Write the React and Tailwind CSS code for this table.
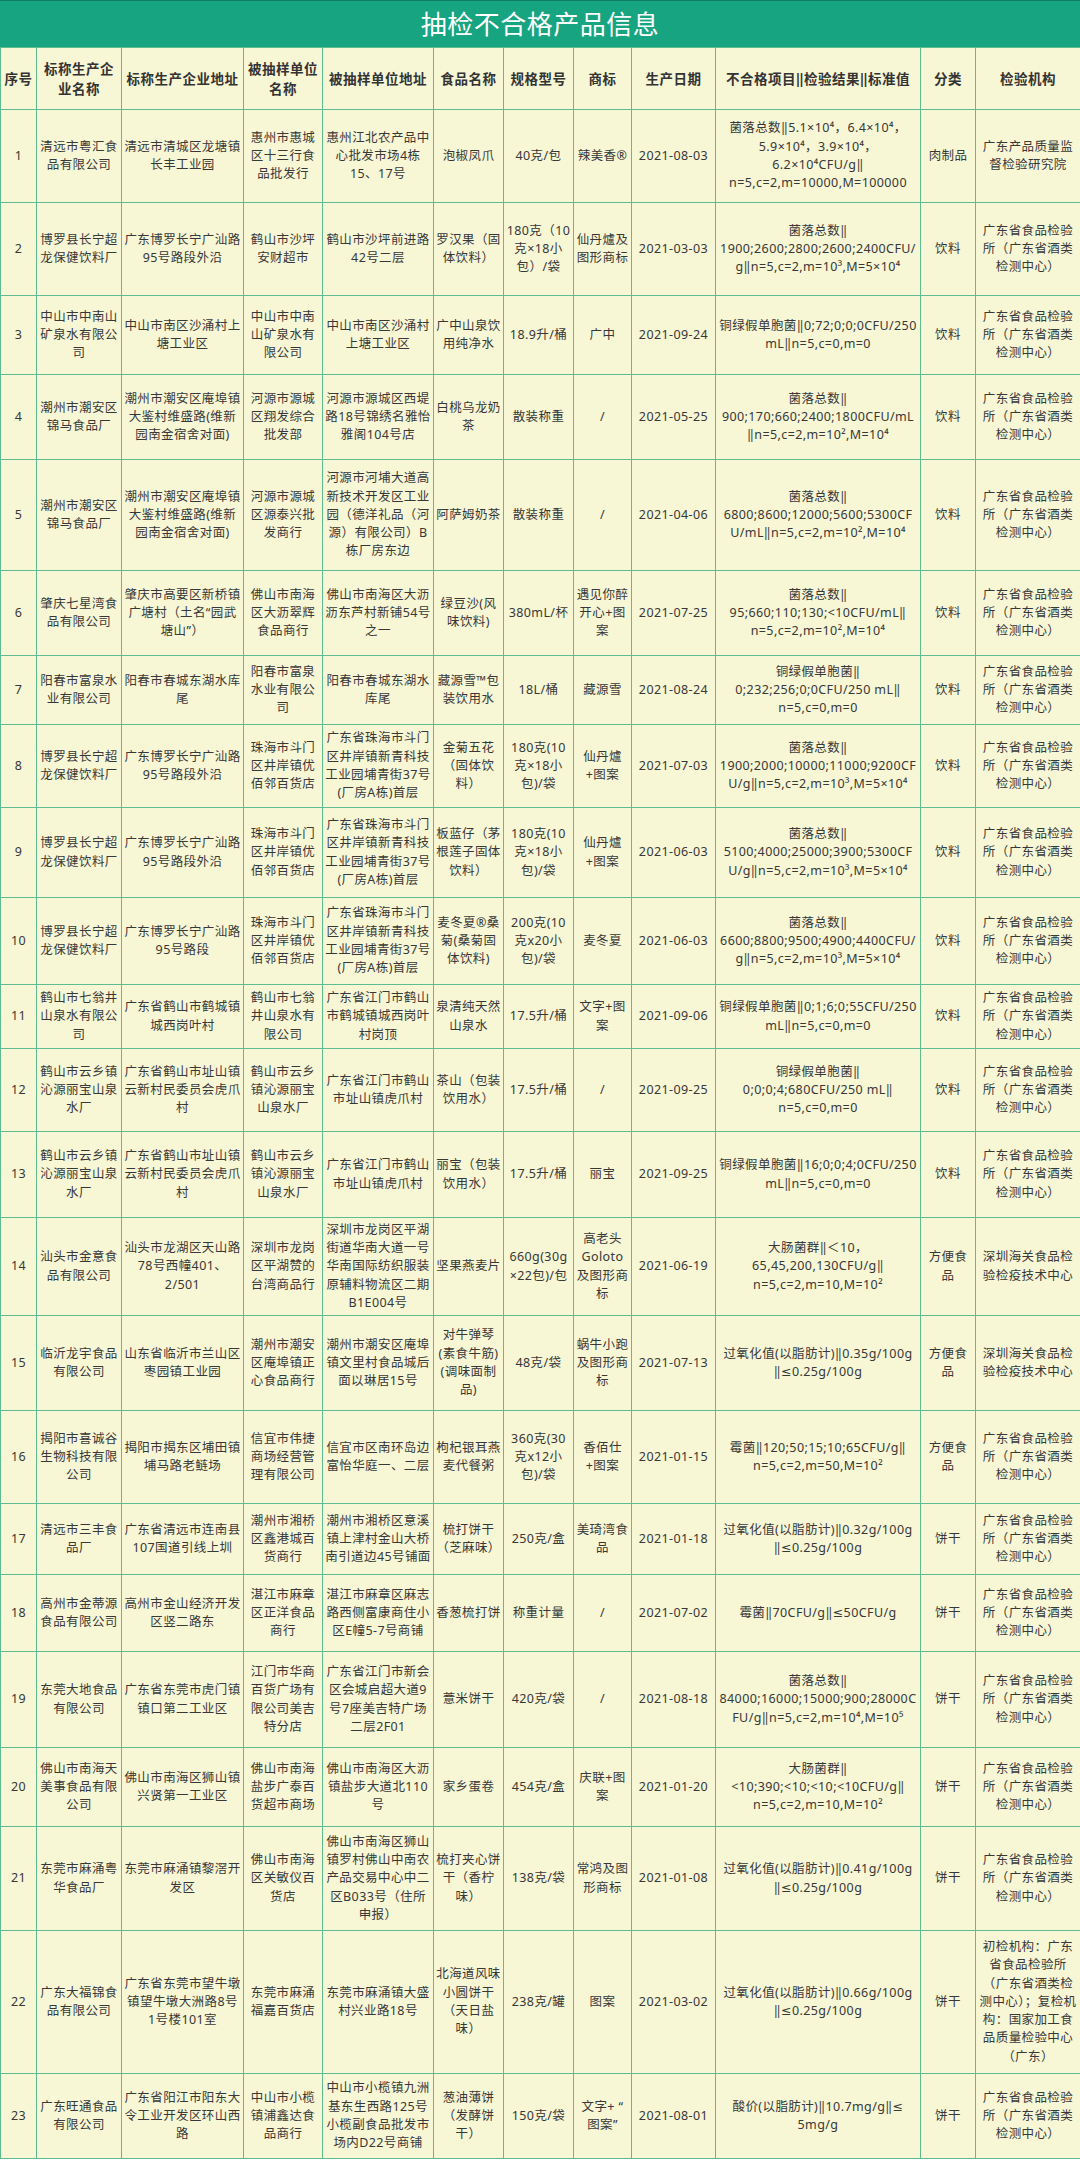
import React from 'react';

const GD = '广东省食品检验所（广东省酒类检测中心）';
const SZ = '深圳海关食品检验检疫技术中心';
const BL = '博罗县长宁超龙保健饮料厂';
const BL_ADDR = '广东博罗长宁广汕路95号路段外沿';
const ZH = '珠海市斗门区井岸镇优佰邻百货店';
const ZH_ADDR = '广东省珠海市斗门区井岸镇新青科技工业园埔青街37号(厂房A栋)首层';
const CZ = '潮州市潮安区锦马食品厂';
const CZ_ADDR = '潮州市潮安区庵埠镇大鉴村维盛路(维新园南金宿舍对面)';
const HS = '鹤山市云乡镇沁源丽宝山泉水厂';
const HS_ADDR = '广东省鹤山市址山镇云新村民委员会虎爪村';

const cols = [
  'w-[36px]', 'w-[85px]', 'w-[122px]', 'w-[79px]', 'w-[111px]', 'w-[70px]',
  'w-[70px]', 'w-[58px]', 'w-[84px]', 'w-[205px]', 'w-[55px]', 'w-[105px]',
];

const headers = [
  '序号', '标称生产企业名称', '标称生产企业地址', '被抽样单位名称', '被抽样单位地址', '食品名称',
  '规格型号', '商标', '生产日期', '不合格项目‖检验结果‖标准值', '分类', '检验机构',
];

// \n keeps the line breaks of the source sheet where the browser would wrap differently
const rows = [
  { h: 'h-[93px]', c: ['1', '清远市粤汇食品有限公司', '清远市清城区龙塘镇长丰工业园', '惠州市惠城区十三行食品批发行', '惠州江北农产品中心批发市场4栋15、17号', '泡椒凤爪', '40克/包', '辣美香®', '2021-08-03', '菌落总数‖5.1×10⁴，6.4×10⁴，\n5.9×10⁴，3.9×10⁴，\n6.2×10⁴CFU/g‖\nn=5,c=2,m=10000,M=100000', '肉制品', '广东产品质量监督检验研究院'] },
  { h: 'h-[93px]', c: ['2', BL, BL_ADDR, '鹤山市沙坪安财超市', '鹤山市沙坪前进路42号二层', '罗汉果（固体饮料）', '180克（10克×18小包）/袋', '仙丹爐及图形商标', '2021-03-03', '菌落总数‖\n1900;2600;2800;2600;2400CFU/\ng‖n=5,c=2,m=10³,M=5×10⁴', '饮料', GD] },
  { h: 'h-[79px]', c: ['3', '中山市中南山矿泉水有限公司', '中山市南区沙涌村上塘工业区', '中山市中南山矿泉水有限公司', '中山市南区沙涌村上塘工业区', '广中山泉饮用纯净水', '18.9升/桶', '广中', '2021-09-24', '铜绿假单胞菌‖0;72;0;0;0CFU/250\nmL‖n=5,c=0,m=0', '饮料', GD] },
  { h: 'h-[85px]', c: ['4', CZ, CZ_ADDR, '河源市源城区翔发综合批发部', '河源市源城区西堤路18号锦绣名雅怡雅阁104号店', '白桃乌龙奶茶', '散装称重', '/', '2021-05-25', '菌落总数‖\n900;170;660;2400;1800CFU/mL\n‖n=5,c=2,m=10²,M=10⁴', '饮料', GD] },
  { h: 'h-[111px]', c: ['5', CZ, CZ_ADDR, '河源市源城区源泰兴批发商行', '河源市河埔大道高新技术开发区工业园（德洋礼品（河源）有限公司）B栋厂房东边', '阿萨姆奶茶', '散装称重', '/', '2021-04-06', '菌落总数‖\n6800;8600;12000;5600;5300CF\nU/mL‖n=5,c=2,m=10²,M=10⁴', '饮料', GD] },
  { h: 'h-[85px]', c: ['6', '肇庆七星湾食品有限公司', '肇庆市高要区新桥镇广塘村（土名“园武塘山”）', '佛山市南海区大沥翠辉食品商行', '佛山市南海区大沥沥东芦村新铺54号之一', '绿豆沙(风味饮料)', '380mL/杯', '遇见你醉开心+图案', '2021-07-25', '菌落总数‖\n95;660;110;130;<10CFU/mL‖\nn=5,c=2,m=10²,M=10⁴', '饮料', GD] },
  { h: 'h-[69px]', c: ['7', '阳春市富泉水业有限公司', '阳春市春城东湖水库尾', '阳春市富泉水业有限公司', '阳春市春城东湖水库尾', '藏源雪™包装饮用水', '18L/桶', '藏源雪', '2021-08-24', '铜绿假单胞菌‖\n0;232;256;0;0CFU/250 mL‖\nn=5,c=0,m=0', '饮料', GD] },
  { h: 'h-[83px]', c: ['8', BL, BL_ADDR, ZH, ZH_ADDR, '金菊五花（固体饮料）', '180克(10克×18小包)/袋', '仙丹爐+图案', '2021-07-03', '菌落总数‖\n1900;2000;10000;11000;9200CF\nU/g‖n=5,c=2,m=10³,M=5×10⁴', '饮料', GD] },
  { h: 'h-[90px]', c: ['9', BL, BL_ADDR, ZH, ZH_ADDR, '板蓝仔（茅根莲子固体饮料）', '180克(10克×18小包)/袋', '仙丹爐+图案', '2021-06-03', '菌落总数‖\n5100;4000;25000;3900;5300CF\nU/g‖n=5,c=2,m=10³,M=5×10⁴', '饮料', GD] },
  { h: 'h-[87px]', c: ['10', BL, '广东博罗长宁广汕路95号路段', ZH, ZH_ADDR, '麦冬夏®桑菊(桑菊固体饮料)', '200克(10克x20小包)/袋', '麦冬夏', '2021-06-03', '菌落总数‖\n6600;8800;9500;4900;4400CFU/\ng‖n=5,c=2,m=10³,M=5×10⁴', '饮料', GD] },
  { h: 'h-[64px]', c: ['11', '鹤山市七翁井山泉水有限公司', '广东省鹤山市鹤城镇城西岗叶村', '鹤山市七翁井山泉水有限公司', '广东省江门市鹤山市鹤城镇城西岗叶村岗顶', '泉清纯天然山泉水', '17.5升/桶', '文字+图案', '2021-09-06', '铜绿假单胞菌‖0;1;6;0;55CFU/250\nmL‖n=5,c=0,m=0', '饮料', GD] },
  { h: 'h-[83px]', c: ['12', HS, HS_ADDR, HS, '广东省江门市鹤山市址山镇虎爪村', '茶山（包装饮用水）', '17.5升/桶', '/', '2021-09-25', '铜绿假单胞菌‖\n0;0;0;4;680CFU/250 mL‖\nn=5,c=0,m=0', '饮料', GD] },
  { h: 'h-[86px]', c: ['13', HS, HS_ADDR, HS, '广东省江门市鹤山市址山镇虎爪村', '丽宝（包装饮用水）', '17.5升/桶', '丽宝', '2021-09-25', '铜绿假单胞菌‖16;0;0;4;0CFU/250\nmL‖n=5,c=0,m=0', '饮料', GD] },
  { h: 'h-[98px]', c: ['14', '汕头市金意食品有限公司', '汕头市龙湖区天山路78号西幢401、2/501', '深圳市龙岗区平湖赞的台湾商品行', '深圳市龙岗区平湖街道华南大道一号华南国际纺织服装原辅料物流区二期B1E004号', '坚果燕麦片', '660g(30g×22包)/包', '高老头Goloto及图形商标', '2021-06-19', '大肠菌群‖＜10，\n65,45,200,130CFU/g‖\nn=5,c=2,m=10,M=10²', '方便食品', SZ] },
  { h: 'h-[95px]', c: ['15', '临沂龙宇食品有限公司', '山东省临沂市兰山区枣园镇工业园', '潮州市潮安区庵埠镇正心食品商行', '潮州市潮安区庵埠镇文里村食品城后面以琳居15号', '对牛弹琴(素食牛筋)(调味面制品)', '48克/袋', '蜗牛小跑及图形商标', '2021-07-13', '过氧化值(以脂肪计)‖0.35g/100g\n‖≤0.25g/100g', '方便食品', SZ] },
  { h: 'h-[93px]', c: ['16', '揭阳市喜诚谷生物科技有限公司', '揭阳市揭东区埔田镇埔马路老鲢场', '信宜市伟捷商场经营管理有限公司', '信宜市区南环岛边富怡华庭一、二层', '枸杞银耳燕麦代餐粥', '360克(30克x12小包)/袋', '香佰仕+图案', '2021-01-15', '霉菌‖120;50;15;10;65CFU/g‖\nn=5,c=2,m=50,M=10²', '方便食品', GD] },
  { h: 'h-[71px]', c: ['17', '清远市三丰食品厂', '广东省清远市连南县107国道引线上圳', '潮州市湘桥区鑫港城百货商行', '潮州市湘桥区意溪镇上津村金山大桥南引道边45号铺面', '梳打饼干（芝麻味）', '250克/盒', '美琦湾食品', '2021-01-18', '过氧化值(以脂肪计)‖0.32g/100g\n‖≤0.25g/100g', '饼干', GD] },
  { h: 'h-[77px]', c: ['18', '高州市金蒂源食品有限公司', '高州市金山经济开发区竖二路东', '湛江市麻章区正洋食品商行', '湛江市麻章区麻志路西侧富康商住小区E幢5-7号商铺', '香葱梳打饼', '称重计量', '/', '2021-07-02', '霉菌‖70CFU/g‖≤50CFU/g', '饼干', GD] },
  { h: 'h-[96px]', c: ['19', '东莞大地食品有限公司', '广东省东莞市虎门镇镇口第二工业区', '江门市华商百货广场有限公司美吉特分店', '广东省江门市新会区会城启超大道9号7座美吉特广场二层2F01', '薏米饼干', '420克/袋', '/', '2021-08-18', '菌落总数‖\n84000;16000;15000;900;28000C\nFU/g‖n=5,c=2,m=10⁴,M=10⁵', '饼干', GD] },
  { h: 'h-[79px]', c: ['20', '佛山市南海天美事食品有限公司', '佛山市南海区狮山镇兴贤第一工业区', '佛山市南海盐步广泰百货超市商场', '佛山市南海区大沥镇盐步大道北110号', '家乡蛋卷', '454克/盒', '庆联+图案', '2021-01-20', '大肠菌群‖\n<10;390;<10;<10;<10CFU/g‖\nn=5,c=2,m=10,M=10²', '饼干', GD] },
  { h: 'h-[104px]', c: ['21', '东莞市麻涌粤华食品厂', '东莞市麻涌镇黎滘开发区', '佛山市南海区关敏仪百货店', '佛山市南海区狮山镇罗村佛山中南农产品交易中心中二区B033号（住所申报）', '梳打夹心饼干（香柠味）', '138克/袋', '常鸿及图形商标', '2021-01-08', '过氧化值(以脂肪计)‖0.41g/100g\n‖≤0.25g/100g', '饼干', GD] },
  { h: 'h-[143px]', c: ['22', '广东大福锦食品有限公司', '广东省东莞市望牛墩镇望牛墩大洲路8号1号楼101室', '东莞市麻涌福嘉百货店', '东莞市麻涌镇大盛村兴业路18号', '北海道风味小圆饼干（天日盐味）', '238克/罐', '图案', '2021-03-02', '过氧化值(以脂肪计)‖0.66g/100g\n‖≤0.25g/100g', '饼干', '初检机构：广东省食品检验所（广东省酒类检测中心）；复检机构：国家加工食品质量检验中心（广东）'] },
  { h: 'h-[85px]', c: ['23', '广东旺通食品有限公司', '广东省阳江市阳东大令工业开发区环山西路', '中山市小榄镇浦鑫达食品商行', '中山市小榄镇九洲基东生西路125号小榄副食品批发市场内D22号商铺', '葱油薄饼（发酵饼干）', '150克/袋', '文字+ “\n图案”', '2021-08-01', '酸价(以脂肪计)‖10.7mg/g‖≤\n5mg/g', '饼干', GD] },
];

export default function App() {
  return (
    <div className="w-[1080px] bg-[#F7F6D5] font-['Noto_Sans','DejaVu_Sans','Noto_Sans_CJK_SC',sans-serif] text-[#383838]">
      <div className="h-[47px] bg-[#17a480] border-t border-[#0f7d60] flex items-center justify-center text-white text-[26px] tracking-[0.5px]">
        抽检不合格产品信息
      </div>
      <table className="w-[1080px] table-fixed border-collapse">
        <colgroup>
          {cols.map((w, i) => (
            <col key={i} className={w} />
          ))}
        </colgroup>
        <thead>
          <tr className="h-[62px]">
            {headers.map((t, i) => (
              <th
                key={i}
                className="border border-[#5dbd90] px-[2px] text-center align-middle text-[13.5px] leading-[20px] tracking-[0.5px] font-bold text-[#333] [overflow-wrap:anywhere]"
              >
                {t}
              </th>
            ))}
          </tr>
        </thead>
        <tbody>
          {rows.map((r) => (
            <tr key={r.c[0]} className={r.h}>
              {r.c.map((t, i) => (
                <td
                  key={i}
                  className={`border border-[#5dbd90] text-center align-middle text-[12.5px] leading-[18.3px] tracking-[0.4px] whitespace-pre-line [overflow-wrap:anywhere] ${
                    i === 9 ? 'px-[1px]' : 'px-[2px]'
                  }`}
                >
                  {t}
                </td>
              ))}
            </tr>
          ))}
        </tbody>
      </table>
    </div>
  );
}
